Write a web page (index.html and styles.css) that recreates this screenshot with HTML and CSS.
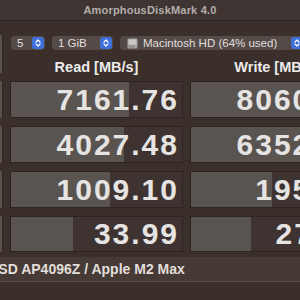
FILE: index.html
```html
<!DOCTYPE html>
<html>
<head>
<meta charset="utf-8">
<link rel="stylesheet" href="styles.css">
</head>
<body>
<div class="window">
  <div class="titlebar">AmorphousDiskMark 4.0</div>
  <div class="grid">
    <div class="side side-all"></div>
    <div class="top">
      <div class="controls">
        <div class="popup p-count"><span class="ptext">5</span><span class="stepper"><svg viewBox="0 0 12 12" width="12" height="12"><path d="M4 5 L6 3 L8 5 M4 7 L6 9 L8 7" fill="none" stroke="#fff" stroke-width="1.2" stroke-linecap="round" stroke-linejoin="round"/></svg></span></div>
        <div class="popup p-size"><span class="ptext">1 GiB</span><span class="stepper"><svg viewBox="0 0 12 12" width="12" height="12"><path d="M4 5 L6 3 L8 5 M4 7 L6 9 L8 7" fill="none" stroke="#fff" stroke-width="1.2" stroke-linecap="round" stroke-linejoin="round"/></svg></span></div>
        <div class="popup p-drive"><svg class="disk" viewBox="0 0 11 11" width="11" height="11"><rect x="0.5" y="0.5" width="10" height="10" rx="1.5" fill="#a9a6a4"/><rect x="1.5" y="1.5" width="8" height="5" rx="1" fill="#c9c7c5"/><rect x="1.5" y="7.5" width="8" height="2" fill="#8e8a88"/><circle cx="8.3" cy="8.5" r="0.6" fill="#d8d6d4"/></svg><span class="ptext">Macintosh HD (64% used)</span><span class="stepper"><svg viewBox="0 0 12 12" width="12" height="12"><path d="M4 5 L6 3 L8 5 M4 7 L6 9 L8 7" fill="none" stroke="#fff" stroke-width="1.2" stroke-linecap="round" stroke-linejoin="round"/></svg></span></div>
      </div>
      <div class="heads">
        <div class="head">Read [MB/s]</div>
        <div class="head">Write [MB/s]</div>
      </div>
    </div>

    <div class="side"></div>
    <div class="cell"><div class="bar" style="width:69%"></div><span class="val">7161.76</span></div>
    <div class="cell"><div class="bar" style="width:100%"></div><span class="val">8060.55</span></div>

    <div class="side"></div>
    <div class="cell"><div class="bar" style="width:66%"></div><span class="val">4027.48</span></div>
    <div class="cell"><div class="bar" style="width:100%"></div><span class="val">6352.93</span></div>

    <div class="side"></div>
    <div class="cell"><div class="bar" style="width:58%"></div><span class="val">1009.10</span></div>
    <div class="cell"><div class="bar" style="width:47.5%"></div><span class="val">195.44</span></div>

    <div class="side"></div>
    <div class="cell"><div class="bar" style="width:36.5%"></div><span class="val">33.99</span></div>
    <div class="cell"><div class="bar" style="width:35%"></div><span class="val">27.11</span></div>
  </div>
  <div class="footer"><span class="ftext">SSD AP4096Z / Apple M2 Max</span></div>
</div>
</body>
</html>
```
FILE: styles.css
```css
html, body {
  margin: 0;
  padding: 0;
  background: #3a2f2b;
  overflow: hidden;
  width: 300px;
  height: 300px;
}
.window {
  width: 300px;
  height: 300px;
  overflow: hidden;
  font-family: "Liberation Sans", "Noto Sans", sans-serif;
  color: #e4e1df;
}
.titlebar {
  height: 20px;
  line-height: 20px;
  background: #3e3533;
  border-bottom: 1px solid #2a2220;
  text-align: center;
  font-size: 11px;
  font-weight: bold;
  color: #b3adaa;
  letter-spacing: 0.2px;
}
.grid {
  display: grid;
  grid-template-columns: 3px 173px 173px;
  grid-template-rows: 38px 37px 37px 37px 36px;
  column-gap: 7px;
  row-gap: 8px;
  margin-top: 14px;
  width: 363px;
}
.side {
  background: #58514e;
  border-right: 1px solid #2e2522;
}
.top {
  grid-column: 2 / 4;
  display: flex;
  flex-direction: column;
}
.controls {
  display: flex;
  gap: 7px;
  margin-top: 1px;
  margin-left: 1px;
}
.popup {
  height: 14px;
  border-radius: 4px;
  background: #544b48;
  display: flex;
  align-items: center;
  padding: 0 1px 0 6px;
  font-size: 11.5px;
  color: #e2dfdd;
  box-sizing: border-box;
}
.ptext {
  flex: 1;
  white-space: nowrap;
}
.p-count { width: 34px; }
.p-size { width: 61px; }
.p-drive { width: 184px; padding-left: 7px; }
.disk { margin-right: 5px; flex: none; }
.stepper {
  width: 12px;
  height: 12px;
  border-radius: 3px;
  background: #3c6fd9;
  display: flex;
  flex: none;
}
.heads {
  display: grid;
  grid-template-columns: 173px 173px;
  column-gap: 7px;
  margin-top: 9px;
}
.head {
  text-align: center;
  font-size: 14.5px;
  font-weight: bold;
  color: #ecebea;
}
.cell {
  position: relative;
  background: #3e3330;
  border: 1px solid #2d2421;
  box-sizing: border-box;
  display: flex;
  align-items: center;
  justify-content: flex-end;
  overflow: hidden;
}
.bar {
  position: absolute;
  left: 0;
  top: 0;
  bottom: 0;
  background: #5a5451;
}
.val {
  position: relative;
  font-size: 30px;
  font-weight: bold;
  color: #e6e4e2;
  padding-right: 3px;
  letter-spacing: 2px;
}
.footer {
  margin-top: 5px;
  height: 24px;
  background: #453a35;
  border-bottom: 1px solid #5a4f4a;
  display: flex;
  align-items: center;
  overflow: hidden;
}
.ftext {
  margin-left: -11px;
  font-size: 14px;
  font-weight: bold;
  color: #e2dedb;
  white-space: nowrap;
}
```
